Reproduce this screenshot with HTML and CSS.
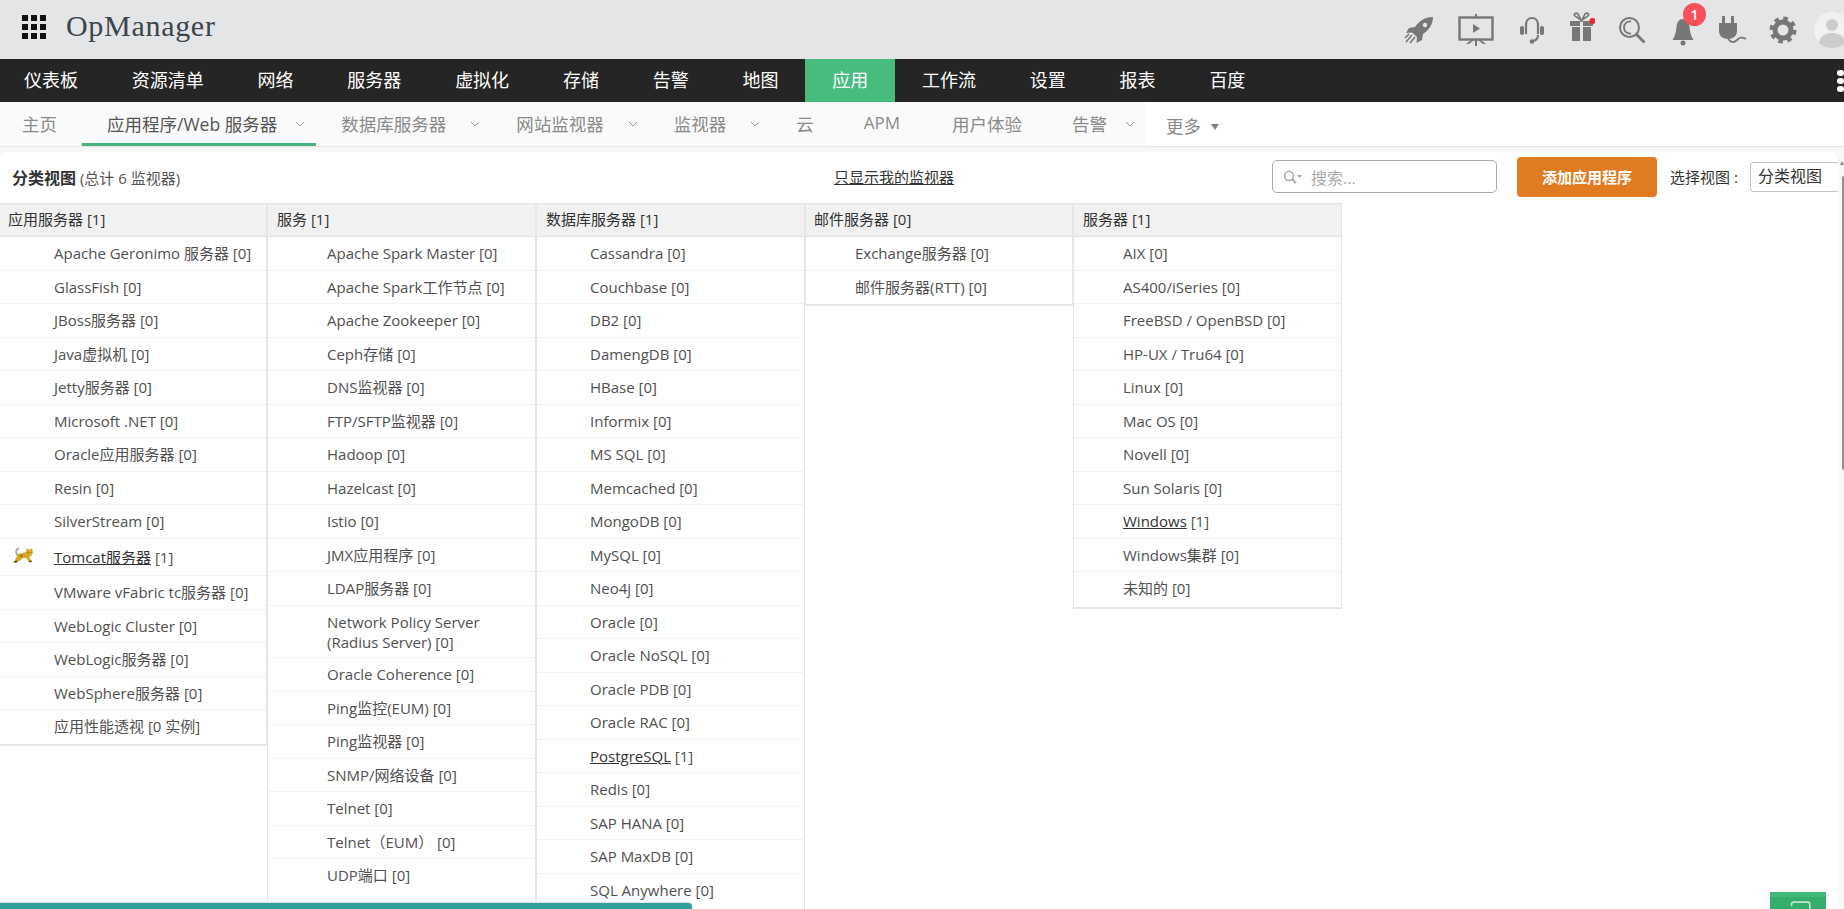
FILE: index.html
```html
<!DOCTYPE html>
<html lang="zh-CN">
<head>
<meta charset="utf-8">
<title>OpManager</title>
<link rel="stylesheet" href="styles.css">
</head>
<body>
<div class="app">
  <header class="topbar">
    <div class="grid-icon"><i></i><i></i><i></i><i></i><i></i><i></i><i></i><i></i><i></i></div>
    <div class="logo">OpManager</div>
    <div class="tools">
      <svg class="ic i-rocket" viewBox="0 0 30 28"><path fill="#777" d="M29 1C21 1 15 5 11 11L5 12 2 17l6-.5 5 4.500-.5 6 5.500-3 1-6C25 14 29 8 29 1z"/><circle cx="21" cy="9" r="2.200" fill="#e4e5e7"/><path stroke="#777" stroke-width="1.600" d="M8 19l-6 7M11 21l-5 6M5 18l-4 4"/></svg>
      <svg class="ic i-screen" viewBox="0 0 36 32"><path fill="#777" d="M17 0h2v3h-2z"/><rect x="1.500" y="3.500" width="33" height="22" fill="none" stroke="#777" stroke-width="2.400"/><path fill="#777" d="M15 10l7 4.500-7 4.500zM17 26h2v6h-2zM13 26h3l-5 4h-3zM20 26h3l5 4h-3z"/></svg>
      <svg class="ic i-head" viewBox="0 0 26 30"><path fill="none" stroke="#777" stroke-width="2.200" d="M7 19V10c0-4 2.500-7 6-7s6 3 6 7v9M19 20c0 3-2 5.500-5 6"/><rect x="1" y="11" width="4" height="9" rx="2" fill="#777"/><rect x="21" y="11" width="4" height="9" rx="2" fill="#777"/><circle cx="13" cy="26.500" r="2.300" fill="#777"/></svg>
      <svg class="ic i-gift" viewBox="0 0 26 30"><path fill="none" stroke="#777" stroke-width="1.600" d="M12 8L6 4c-2-2 1-4 3-2zM13 8l6-4c2-2-1-4-3-2z"/><path fill="#777" d="M1 9h10v5H1zM14 9h10v5H14zM3 15h8v14H3zM14 15h8v14h-8z"/><circle cx="23.500" cy="9" r="3" fill="#e8262f"/></svg>
      <svg class="ic i-search" viewBox="0 0 28 28"><circle cx="11.500" cy="11.500" r="9.500" fill="none" stroke="#777" stroke-width="2"/><path fill="none" stroke="#777" stroke-width="1.800" d="M13 5.500c-4-.5-7 2-7 6s3 6.500 7 6"/><path stroke="#777" stroke-width="2.800" d="M18 18l8.500 8.500"/></svg>
      <svg class="ic i-bell" viewBox="0 0 28 32"><path fill="#777" d="M14 4c-4 0-6 3-6.500 8-.4 5-1.500 9-4 13h21c-2.500-4-3.600-8-4-13-.5-5-2.500-8-6.500-8z"/><circle cx="14" cy="28" r="2.500" fill="#777"/></svg>
      <svg class="ic i-plug" viewBox="0 0 30 30"><path fill="#777" d="M4 1h3v7H4zM13 1h3v7h-3zM1 8h18v8c0 5-4 8-9 8s-9-3-9-8z"/><path fill="none" stroke="#777" stroke-width="1.800" d="M10 23c2 5 6 5 9 2s5-3 9-1"/></svg>
      <svg class="ic i-gear" viewBox="0 0 28 28"><circle cx="14" cy="14" r="8" fill="none" stroke="#777" stroke-width="5"/><circle cx="14" cy="14" r="11.500" fill="none" stroke="#777" stroke-width="4" stroke-dasharray="4.500 4.530"/></svg>
      <svg class="ic i-user" viewBox="0 0 36 36"><circle cx="18" cy="18" r="18" fill="#f1f1f1"/><circle cx="18" cy="13" r="6" fill="#ccc"/><path fill="#ccc" d="M5 31c1-7 6-10 13-10s12 3 13 10c-3 3-8 5-13 5s-10-2-13-5z"/></svg>
      <span class="badge">1</span>
    </div>
  </header>

  <nav class="mainnav">
    <a class="first">仪表板</a><a>资源清单</a><a>网络</a><a>服务器</a><a>虚拟化</a><a>存储</a><a>告警</a><a>地图</a><a class="on">应用</a><a>工作流</a><a>设置</a><a>报表</a><a>百度</a>
    <div class="dots"><i></i><i></i><i></i></div>
  </nav>

  <nav class="subnav">
    <a class="tab home">主页</a>
    <a class="tab has tight active">应用程序/Web 服务器<svg class="chev" viewBox="0 0 10 6"><path d="M1 1l4 4 4-4"/></svg></a>
    <a class="tab has">数据库服务器<svg class="chev" viewBox="0 0 10 6"><path d="M1 1l4 4 4-4"/></svg></a>
    <a class="tab has">网站监视器<svg class="chev" viewBox="0 0 10 6"><path d="M1 1l4 4 4-4"/></svg></a>
    <a class="tab has">监视器<svg class="chev" viewBox="0 0 10 6"><path d="M1 1l4 4 4-4"/></svg></a>
    <a class="tab">云</a>
    <a class="tab apm">APM</a>
    <a class="tab">用户体验</a>
    <a class="tab has tight last">告警<svg class="chev" viewBox="0 0 10 6"><path d="M1 1l4 4 4-4"/></svg></a>
    <div class="more">更多<span class="caret"></span></div>
  </nav>

  <main class="page">
    <section class="panel">
      <div class="toolbar">
        <div class="title"><b>分类视图</b> <span>(总计 6 监视器)</span></div>
        <a class="mine">只显示我的监视器</a>
        <div class="searchbox">
          <svg class="s-ic" viewBox="0 0 20 14"><circle cx="6" cy="6" r="4.500" fill="none" stroke="#aaa" stroke-width="1.500"/><path stroke="#aaa" stroke-width="1.800" d="M9 9l4 4"/><path fill="#aaa" d="M14 5h5l-2.500 3z"/></svg>
          <span>搜索...</span>
        </div>
        <button class="add">添加应用程序</button>
        <label class="vlabel">选择视图 :</label>
        <div class="select">分类视图</div>
      </div>

      <div class="board">
        <div class="col c1">
          <h3>应用服务器 [1]</h3>
          <ul>
            <li>Apache Geronimo 服务器 [0]</li>
            <li>GlassFish [0]</li>
            <li>JBoss服务器 [0]</li>
            <li>Java虚拟机 [0]</li>
            <li>Jetty服务器 [0]</li>
            <li>Microsoft .NET [0]</li>
            <li>Oracle应用服务器 [0]</li>
            <li>Resin [0]</li>
            <li>SilverStream [0]</li>
            <li class="tomcat">
              <svg class="cat" viewBox="0 0 22 16"><path fill="none" stroke="#a8a8a8" stroke-width="1.800" d="M8 9C3 8 3 3 7 1"/><path fill="#d8a928" d="M2 15l4-8 8-2 1-4 1.500 1.500h2L20 1l1 5-2 3-2 1.500 3.500 4-3.500.5-3-4-3 0-5 4z"/><path fill="#3f3510" d="M15.500 5l1.200.6-1.200.6zM18.500 5l1 .6-1 .6zM7 9l4-1-1 1.500zM1 15l4-1.500L4.500 16zM17 13.500l3.500 1-3 1z"/></svg>
              <a>Tomcat服务器</a> [1]</li>
            <li class="tall1">VMware vFabric tc服务器 [0]</li>
            <li>WebLogic Cluster [0]</li>
            <li>WebLogic服务器 [0]</li>
            <li>WebSphere服务器 [0]</li>
            <li>应用性能透视 [0 实例]</li>
          </ul>
        </div>
        <div class="col c2 full">
          <h3>服务 [1]</h3>
          <ul>
            <li>Apache Spark Master [0]</li>
            <li>Apache Spark工作节点 [0]</li>
            <li>Apache Zookeeper [0]</li>
            <li>Ceph存储 [0]</li>
            <li>DNS监视器 [0]</li>
            <li>FTP/SFTP监视器 [0]</li>
            <li>Hadoop [0]</li>
            <li>Hazelcast [0]</li>
            <li>Istio [0]</li>
            <li>JMX应用程序 [0]</li>
            <li>LDAP服务器 [0]</li>
            <li class="two">Network Policy Server (Radius Server) [0]</li>
            <li>Oracle Coherence [0]</li>
            <li>Ping监控(EUM) [0]</li>
            <li>Ping监视器 [0]</li>
            <li>SNMP/网络设备 [0]</li>
            <li>Telnet [0]</li>
            <li>Telnet（EUM） [0]</li>
            <li>UDP端口 [0]</li>
          </ul>
        </div>
        <div class="col c3 full">
          <h3>数据库服务器 [1]</h3>
          <ul>
            <li>Cassandra [0]</li>
            <li>Couchbase [0]</li>
            <li>DB2 [0]</li>
            <li>DamengDB [0]</li>
            <li>HBase [0]</li>
            <li>Informix [0]</li>
            <li>MS SQL [0]</li>
            <li>Memcached [0]</li>
            <li>MongoDB [0]</li>
            <li>MySQL [0]</li>
            <li>Neo4j [0]</li>
            <li>Oracle [0]</li>
            <li>Oracle NoSQL [0]</li>
            <li>Oracle PDB [0]</li>
            <li>Oracle RAC [0]</li>
            <li><a>PostgreSQL</a> [1]</li>
            <li>Redis [0]</li>
            <li>SAP HANA [0]</li>
            <li>SAP MaxDB [0]</li>
            <li>SQL Anywhere [0]</li>
          </ul>
        </div>
        <div class="col c4">
          <h3>邮件服务器 [0]</h3>
          <ul>
            <li>Exchange服务器 [0]</li>
            <li>邮件服务器(RTT) [0]</li>
          </ul>
        </div>
        <div class="col c5">
          <h3>服务器 [1]</h3>
          <ul>
            <li>AIX [0]</li>
            <li>AS400/iSeries [0]</li>
            <li>FreeBSD / OpenBSD [0]</li>
            <li>HP-UX / Tru64 [0]</li>
            <li>Linux [0]</li>
            <li>Mac OS [0]</li>
            <li>Novell [0]</li>
            <li>Sun Solaris [0]</li>
            <li><a>Windows</a> [1]</li>
            <li>Windows集群 [0]</li>
            <li>未知的 [0]</li>
          </ul>
        </div>
      </div>
    </section>
  </main>

  <div class="scroll-arrow"></div>
  <div class="scroll-thumb"></div>
  <div class="progress"></div>
  <div class="chat">
    <svg viewBox="0 0 24 14"><path fill="none" stroke="#bfe6cf" stroke-width="1.500" d="M6 5V3a2 2 0 0 1 2-2h13a2 2 0 0 1 2 2v9a2 2 0 0 1-2 2H8"/></svg>
  </div>
</div>
</body>
</html>
```
FILE: styles.css
```css
* { box-sizing: border-box; }
html, body { margin: 0; padding: 0; height: 100%; overflow: hidden; }
body {
  font-family: "Open Sans", "Noto Sans CJK SC", sans-serif;
  font-size: 15px;
  color: #444;
  background: #fff;
}
a { color: inherit; text-decoration: none; }
.app {
  position: relative;
  width: 1844px;
  height: 909px;
  overflow: hidden;
  display: flex;
  flex-direction: column;
}

/* top bar */
.topbar {
  height: 59px;
  flex: none;
  display: flex;
  align-items: center;
  background: #e4e5e7;
  padding-left: 22px;
  position: relative;
}
.grid-icon {
  display: grid;
  grid-template-columns: repeat(3, 6px);
  grid-auto-rows: 6px;
  gap: 3px;
  margin-top: -6px;
}
.grid-icon i { background: #111; display: block; }
.logo {
  font-family: "Liberation Serif", serif;
  font-size: 30px;
  letter-spacing: 0.7px;
  color: #3d444b;
  margin-left: 20px;
  margin-top: -8px;
}
.tools {
  margin-left: auto;
  margin-right: -6px;
  display: flex;
  align-items: center;
  position: relative;
}
.ic { display: block; flex: none; }
.i-rocket { width: 30px; height: 28px; }
.i-screen { width: 36px; height: 32px; margin-left: 24px; }
.i-head { width: 26px; height: 30px; margin-left: 25px; }
.i-gift { width: 26px; height: 30px; margin-left: 24px; margin-top: -6px; }
.i-search { width: 28px; height: 28px; margin-left: 23px; }
.i-bell { width: 28px; height: 32px; margin-left: 23px; margin-top: 2px; }
.i-plug { width: 30px; height: 30px; margin-left: 21px; margin-top: 0; }
.i-gear { width: 28px; height: 28px; margin-left: 21px; }
.i-user { width: 36px; height: 36px; margin-left: 17px; }
.badge {
  position: absolute;
  left: 279px;
  top: -9px;
  width: 23px;
  height: 23px;
  border-radius: 50%;
  background: #f7505a;
  color: #fff;
  font-size: 14px;
  line-height: 23px;
  text-align: center;
  font-weight: 600;
}

/* main nav */
.mainnav {
  height: 43px;
  flex: none;
  background: #252525;
  display: flex;
  position: relative;
}
.mainnav a {
  color: #fff;
  font-size: 18px;
  line-height: 42px;
  padding: 0 26.9px;
}
.mainnav .first { padding-left: 24px; }
.mainnav .on { background: #48bb7f; }
.dots {
  position: absolute;
  right: 0;
  top: 11px;
  display: flex;
  flex-direction: column;
  gap: 2px;
}
.dots i {
  width: 7px;
  height: 6px;
  border-radius: 3px;
  background: #fff;
  display: block;
}

/* sub nav */
.subnav {
  height: 44px;
  flex: none;
  display: flex;
  background: #fafafa;
  box-shadow: 0 1px 1px #e8e8e8;
  position: relative;
  z-index: 1;
}
.tab {
  height: 44px;
  font-size: 17.5px;
  line-height: 42px;
  padding: 0 25px;
  color: #8a8a8a;
  display: flex;
  align-items: center;
  white-space: nowrap;
}
.home { padding-left: 22px; }
.apm { font-size: 17px; padding-bottom: 3px; padding-right: 27px; }
.has { padding-right: 11px; }
.chev {
  width: 10px;
  height: 6px;
  margin-left: 24px;
  fill: none;
  stroke: #999;
  stroke-width: 1;
}
.tight .chev { margin-left: 18px; }
.active {
  color: #555;
  border-bottom: 3px solid #48b27f;
  padding-top: 3px;
}
.last { padding-right: 11px; }
.more {
  flex: 1;
  background: #fff;
  padding: 7px 0 0 20px;
  font-size: 17.5px;
  line-height: 34px;
  color: #8a8a8a;
}
.caret {
  display: inline-block;
  margin-left: 10px;
  vertical-align: 3px;
  border-left: 4.5px solid transparent;
  border-right: 4.5px solid transparent;
  border-top: 6px solid #808080;
}

/* page */
.page {
  flex: 1;
  min-height: 0;
  background: #f7f7f7;
  padding: 6px 6px 0 0;
}
.panel {
  background: #fff;
  height: 100%;
  border-radius: 6px 6px 0 0;
  display: flex;
  flex-direction: column;
}
.toolbar {
  height: 51px;
  flex: none;
  position: relative;
  display: flex;
  align-items: center;
  padding: 0 0 2px 12px;
  color: #333;
  overflow: hidden;
}
.title { width: 822px; flex: none; white-space: nowrap; }
.title b { font-size: 16px; font-weight: 700; color: #333; }
.title span { font-size: 15px; color: #555; }
.mine { font-size: 15px; color: #333; text-decoration: underline; width: 438px; flex: none; }
.searchbox {
  width: 225px;
  height: 33px;
  border: 1px solid #aaa;
  border-radius: 5px;
  display: flex;
  align-items: center;
  padding-left: 10px;
  color: #aaa;
  font-size: 16px;
  flex: none;
}
.s-ic { width: 20px; height: 14px; margin-right: 8px; }
.add {
  width: 140px;
  height: 40px;
  margin-left: 20px;
  border: 0;
  border-radius: 4px;
  background: #e07b22;
  color: #fff;
  font-family: inherit;
  font-size: 15px;
  font-weight: 700;
  flex: none;
}
.vlabel { font-size: 15px; color: #333; margin-left: 13px; width: 80px; flex: none; white-space: pre; }
.select {
  width: 90px;
  height: 30px;
  border: 1px solid #c4c4c4;
  border-right: 0;
  border-radius: 4px 0 0 4px;
  font-size: 16px;
  line-height: 27px;
  padding-left: 7px;
  color: #333;
  flex: none;
}

/* columns */
.board {
  flex: 1;
  min-height: 0;
  display: flex;
  align-items: flex-start;
}
.col {
  flex: none;
  border-left: 1px solid #e6e6e6;
  border-right: 1px solid #e6e6e6;
  border-bottom: 2px solid #e6e6e6;
}
.c1 { width: 267px; border-left: 0; }
.c2 { width: 269px; }
.c3 { width: 269px; }
.c4 { width: 268px; }
.c5 { width: 269px; }
.full { align-self: stretch; border-bottom: 0; }
.col h3 {
  margin: 0;
  height: 34px;
  font-size: 15px;
  font-weight: 400;
  line-height: 31px;
  background: #f1f1f1;
  border-top: 1px solid #e2e2e2;
  border-bottom: 1px solid #e2e2e2;
  color: #333;
}
.col ul { list-style: none; margin: 0; padding: 0; }
.col li {
  position: relative;
  min-height: 33.5px;
  line-height: 22px;
  padding-top: 5px;
  padding-bottom: 5px;
  border-bottom: 1px solid #f3f3f3;
  color: #505050;
}
.col li:last-child { border-bottom: 0; }
.col li a { color: #333; text-decoration: underline; }
.c1 h3 { padding-left: 8px; }
.c2 h3 { padding-left: 9px; }
.c3 h3 { padding-left: 9px; }
.c4 h3 { padding-left: 8px; }
.c5 h3 { padding-left: 9px; }
.c1 li { padding-left: 54px; }
.c2 li { padding-left: 59px; }
.c3 li { padding-left: 53px; }
.c4 li { padding-left: 49px; }
.c5 li { padding-left: 49px; }
.col li.tomcat { min-height: 37px; padding-top: 7px; }
.col li.tall1 { min-height: 34px; }
.col li.two { min-height: 52.5px; line-height: 20px; padding-top: 6px; padding-right: 40px; }
.c5 li:last-child { min-height: 35px; }
.cat {
  position: absolute;
  left: 12px;
  top: 8px;
  width: 22px;
  height: 16px;
}

/* overlays */
.scroll-arrow {
  position: absolute;
  right: 0;
  top: 161px;
  border-left: 2.5px solid transparent;
  border-right: 2.5px solid transparent;
  border-bottom: 4px solid #888;
}
.scroll-thumb {
  position: absolute;
  right: 0;
  top: 176px;
  width: 2px;
  height: 294px;
  background: #8f8f8f;
  border-radius: 2px 0 0 2px;
}
.progress {
  position: absolute;
  left: 0;
  bottom: 0;
  width: 692px;
  height: 6px;
  background: #2fa19f;
  border-radius: 0 4px 0 0;
  box-shadow: 0 -1px 1px #ddd;
}
.chat {
  position: absolute;
  left: 1770px;
  bottom: 0;
  width: 56px;
  height: 17px;
  background: #35ad6d;
  border-top: 5px solid #3fba78;
  padding: 4px 0 0 15px;
  overflow: hidden;
}
.chat svg { display: block; width: 26px; height: 15px; }
```
